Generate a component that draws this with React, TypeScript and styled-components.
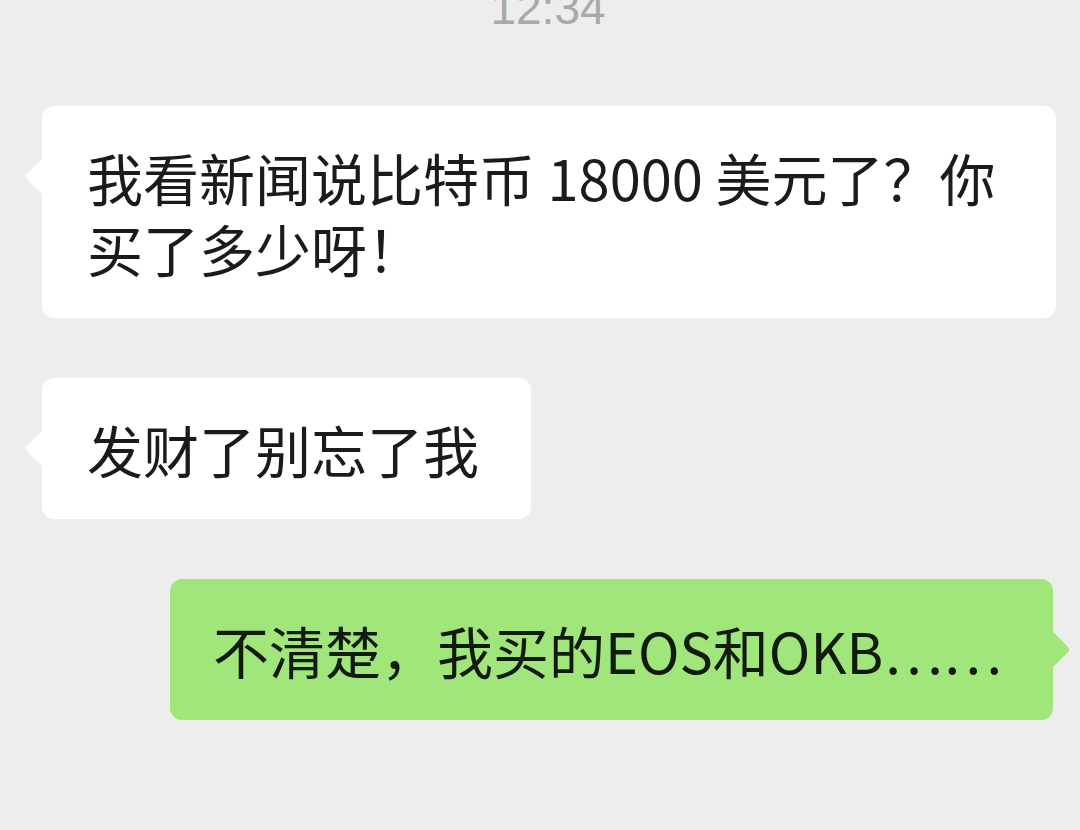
import React from 'react';
import styled, { createGlobalStyle } from 'styled-components';

const GlobalStyle = createGlobalStyle`
  html, body {
    margin: 0;
    padding: 0;
    background: #ededed;
  }
  body {
    width: 1080px;
    height: 830px;
    overflow: hidden;
    font-family: "Noto Sans CJK SC", "Noto Sans", sans-serif;
  }
`;

type Side = 'left' | 'right';

const Page = styled.div`
  width: 1080px;
  height: 830px;
  background: #ededed;
  display: flex;
  flex-direction: column;
  overflow: hidden;
`;

// 상단 시간
const Time = styled.div`
  margin-top: -15px;
  text-align: center;
  padding-left: 16px;
  font: normal normal normal 46px/46px "Liberation Sans", Arial, sans-serif;
  color: #a9a9a9;
`;

const List = styled.div`
  margin-top: 75px;
  display: flex;
  flex-direction: column;
  gap: 60px;
`;

const Row = styled.div<{ $side: Side }>`
  display: flex;
  justify-content: ${(p) => (p.$side === 'left' ? 'flex-start' : 'flex-end')};
  padding: ${(p) => (p.$side === 'left' ? '0 24px 0 42px' : '0 27px 0 42px')};
`;

const Bubble = styled.div<{ $side: Side }>`
  position: relative;
  max-width: 1014px;
  box-sizing: border-box;
  padding: ${(p) => (p.$side === 'left' ? '35px 52px 35px 45px' : '35px 51px 35px 43px')};
  border-radius: 12px;
  background: ${(p) => (p.$side === 'left' ? '#ffffff' : '#a0e67b')};
  color: ${(p) => (p.$side === 'left' ? '#1b1b1b' : '#121a0e')};
  font-size: 56px;
  line-height: 71px;
  word-break: break-all;

  &::before {
    content: '';
    position: absolute;
    top: 57px;
    ${(p) => (p.$side === 'left' ? 'left: -12px;' : 'right: -12px;')}
    width: 27px;
    height: 27px;
    border-radius: 4px;
    background: inherit;
    transform: rotate(45deg);
  }
`;

const messages: { side: Side; text: string }[] = [
  { side: 'left', text: '我看新闻说比特币 18000 美元了？你买了多少呀！' },
  { side: 'left', text: '发财了别忘了我' },
  { side: 'right', text: '不清楚，我买的EOS和OKB……' },
];

const App = () => {
  return (
    <Page>
      <GlobalStyle />
      <Time>12:34</Time>
      <List>
        {messages.map((m, idx) => (
          <Row key={idx} $side={m.side}>
            <Bubble $side={m.side}>{m.text}</Bubble>
          </Row>
        ))}
      </List>
    </Page>
  );
};

export default App;
